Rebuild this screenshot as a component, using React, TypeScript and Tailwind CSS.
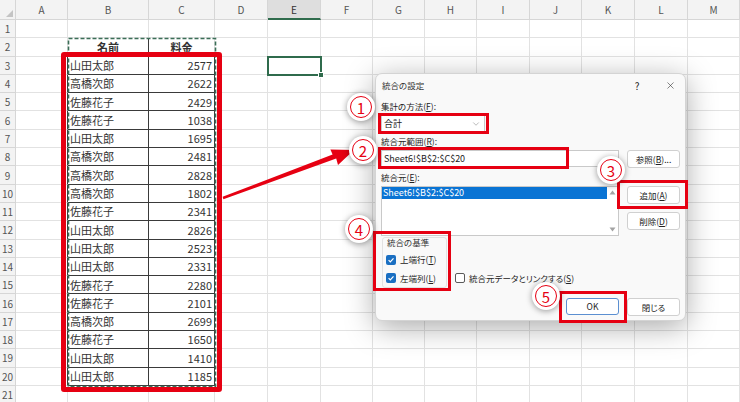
import { ChevronDown, X } from 'lucide-react'

const COLS = ['A', 'B', 'C', 'D', 'E', 'F', 'G', 'H', 'I', 'J', 'K', 'L', 'M']

const rows: [string, number][] = [
  ['山田太郎', 2577],
  ['高橋次郎', 2622],
  ['佐藤花子', 2429],
  ['佐藤花子', 1038],
  ['山田太郎', 1695],
  ['高橋次郎', 2481],
  ['高橋次郎', 2828],
  ['高橋次郎', 1802],
  ['佐藤花子', 2341],
  ['山田太郎', 2826],
  ['山田太郎', 2523],
  ['山田太郎', 2331],
  ['佐藤花子', 2280],
  ['佐藤花子', 2101],
  ['高橋次郎', 2699],
  ['佐藤花子', 1650],
  ['山田太郎', 1410],
  ['山田太郎', 1185],
]

function Sheet() {
  const cells = []

  // column headers
  cells.push(
    <div key="corner" className="relative bg-[#f3f3f3] border-r border-b border-[#d6d6d6]">
      <span className="absolute right-[2px] bottom-[2px] w-0 h-0 border-l-[7px] border-l-transparent border-b-[7px] border-b-[#c4c4c4]" />
    </div>
  )
  COLS.forEach((c) =>
    cells.push(
      <div
        key={c}
        className={
          c === 'E'
            ? 'flex items-center justify-center bg-[#dedede] border-r border-r-[#d6d6d6] border-b-2 border-b-[#2f6b4c] text-[10px] text-[#333]'
            : 'flex items-center justify-center bg-[#f3f3f3] border-r border-b border-[#d6d6d6] text-[10px] text-[#555]'
        }
      >
        {c}
      </div>
    )
  )

  for (let r = 1; r <= 21; r++) {
    cells.push(
      <div
        key={`h${r}`}
        className="flex items-center justify-center bg-[#f3f3f3] border-r border-b border-[#d6d6d6] text-[10px] text-[#555]"
      >
        {r}
      </div>
    )
    COLS.forEach((c) => {
      const inTable = r >= 3 && r <= 20
      const rDark = (inTable && (c === 'A' || c === 'B' || c === 'C')) || (r === 2 && c === 'B')
      const bDark = (inTable || r === 2) && (c === 'B' || c === 'C')
      let content: React.ReactNode = null
      let align = 'justify-start pl-[2px]'
      if (r === 2 && c === 'B') {
        content = <span className="font-bold">名前</span>
        align = 'justify-center'
      } else if (r === 2 && c === 'C') {
        content = <span className="font-bold">料金</span>
        align = 'justify-center'
      } else if (inTable && c === 'B') {
        content = rows[r - 3][0]
      } else if (inTable && c === 'C') {
        content = rows[r - 3][1]
        align = 'justify-end pr-[2px]'
      }
      cells.push(
        <div
          key={`${c}${r}`}
          className={`flex items-center ${align} bg-white border-r border-b text-[11px] text-[#333] ${
            rDark ? 'border-r-[#3a3a3a]' : 'border-r-[#e2e2e2]'
          } ${bDark ? 'border-b-[#3a3a3a]' : 'border-b-[#e2e2e2]'}`}
        >
          {content}
        </div>
      )
    })
  }

  return (
    <div className="grid grid-cols-[16px_52px_81px_66px_53px_53px_52px_52px_52px_53px_52px_53px_53px_52px] grid-rows-[20px_repeat(21,18.3px)]">
      {cells}
    </div>
  )
}

function Check({ on }: { on: boolean }) {
  return on ? (
    <span className="flex items-center justify-center w-[10px] h-[10px] rounded-[2px] bg-[#1a6fc2]">
      <svg width="10" height="10" viewBox="0 0 10 10">
        <polyline points="2.6,5.2 4.3,6.9 7.5,3.3" fill="none" stroke="#fff" strokeWidth="1.2" />
      </svg>
    </span>
  ) : (
    <span className="w-[10px] h-[10px] rounded-[2px] border border-[#5a5a5a] bg-white" />
  )
}

function Btn({ children, primary }: { children: React.ReactNode; primary?: boolean }) {
  return (
    <div
      className={
        primary
          ? 'flex items-center justify-center h-[17px] w-[53px] rounded-[3px] border border-[#5b8fd1] bg-white'
          : 'flex items-center justify-center h-[18px] w-[53px] rounded-[3px] border border-[#d0d0d0] bg-white'
      }
    >
      {children}
    </div>
  )
}

function Dialog() {
  return (
    <div className="absolute left-[375px] top-[73px] w-[311px] h-[248px] rounded-[7px] border border-[#d4d4d4] bg-[#f9f9f9] shadow-[0_6px_30px_rgba(0,0,0,0.34)] flex flex-col text-[8.5px] text-[#222] [font-feature-settings:'palt']">
      {/* title bar */}
      <div className="flex items-center h-[23px] pl-[6px] pr-[1px]">
        <span className="text-[#333]">統合の設定</span>
        <div className="ml-auto flex items-center gap-[9px]">
          <span className="w-[20px] text-center text-[10px]">?</span>
          <span className="w-[28px] flex justify-center">
            <X size={11} strokeWidth={1.3} color="#333" />
          </span>
        </div>
      </div>

      <div className="flex flex-col px-[5px]">
        <div className="h-[18px] flex items-center">
          集計の方法(<u>F</u>):
        </div>
        <div className="h-[17px] w-[104px] flex items-center justify-between pl-[2px] pr-[3px] border border-[#c9c9c9] bg-white text-[9px]">
          <span>合計</span>
          <ChevronDown size={10} strokeWidth={1.2} color="#777" />
        </div>

        <div className="h-[18px] flex items-center">
          統合元範囲(<u>R</u>):
        </div>
        <div className="flex gap-[8px]">
          <div className="h-[17px] w-[239px] flex items-center pl-[2px] border border-[#c9c9c9] bg-white text-[9px]">
            Sheet6!$B$2:$C$20
          </div>
          <Btn>
            参照(<u>B</u>)...
          </Btn>
        </div>

        <div className="h-[18px] flex items-center">
          統合元(<u>E</u>):
        </div>
        <div className="flex gap-[8px]">
          <div className="h-[50px] w-[239px] flex border border-[#c9c9c9] bg-white text-[9px]">
            <div className="flex-1">
              <div className="h-[12px] flex items-center pl-[1px] bg-[#0a74d4] text-white">Sheet6!$B$2:$C$20</div>
            </div>
            <div className="w-[11px] flex flex-col items-center justify-between py-[3px]">
              <svg width="7" height="5" viewBox="0 0 7 5">
                <polygon points="3.5,0.5 6.5,4.5 0.5,4.5" fill="#a3a3a3" />
              </svg>
              <svg width="7" height="5" viewBox="0 0 7 5">
                <polygon points="0.5,0.5 6.5,0.5 3.5,4.5" fill="#a3a3a3" />
              </svg>
            </div>
          </div>
          <div className="flex flex-col gap-[8px]">
            <Btn>
              追加(<u>A</u>)
            </Btn>
            <Btn>
              削除(<u>D</u>)
            </Btn>
          </div>
        </div>

        <div className="flex items-end gap-[8px] mt-[1px]">
          <div className="ml-[1px] w-[65px] flex flex-col border border-[#e2e2e2] rounded-[3px] pl-[3px]">
            <div className="h-[10px] leading-[10px] -mt-[1px] pl-[1px] text-[#333]">統合の基準</div>
            <div className="h-[19px] mt-[3px] flex items-center gap-[4px]">
              <Check on />
              <span>
                上端行(<u>T</u>)
              </span>
            </div>
            <div className="h-[18px] flex items-center gap-[4px]">
              <Check on />
              <span>
                左端列(<u>L</u>)
              </span>
            </div>
          </div>
          <div className="h-[18px] mb-[1px] flex items-center gap-[4px]">
            <Check on={false} />
            <span>
              統合元データとリンクする(<u>S</u>)
            </span>
          </div>
        </div>

        <div className="flex justify-end gap-[8px] mt-[10px]">
          <Btn primary>OK</Btn>
          <Btn>閉じる</Btn>
        </div>
      </div>
    </div>
  )
}

function StepBadge({ n, className }: { n: string; className: string }) {
  return (
    <div
      className={`absolute w-[28px] h-[28px] rounded-full bg-white shadow-[0_1px_6px_rgba(0,0,0,0.4)] flex items-center justify-center ${className}`}
    >
      <div className="w-[22px] h-[22px] rounded-full border-[1.5px] border-[#e60012] flex items-center justify-center text-[15px] leading-none text-[#e60012]">
        {n}
      </div>
    </div>
  )
}

export default function App() {
  return (
    <div className="relative w-[740px] h-[402px] overflow-hidden bg-white font-['Noto_Sans_CJK_JP','Noto_Sans',sans-serif]">
      <Sheet />

      {/* copy marquee around B2:C20 */}
      <svg className="absolute left-[67px] top-[37px] pointer-events-none" width="150" height="351">
        <rect x="1.5" y="1.5" width="147" height="348" fill="none" stroke="#3b6e57" strokeWidth="1.6" strokeDasharray="4 2" />
      </svg>

      {/* active cell E3 */}
      <div className="absolute left-[267px] top-[56px] w-[55px] h-[20px] border-2 border-[#2f6b4c]">
        <span className="absolute -right-[4px] -bottom-[4px] w-[6px] h-[6px] bg-[#2f6b4c] border border-white" />
      </div>

      {/* red frame around data */}
      <div className="absolute left-[61px] top-[52px] w-[161px] h-[340px] border-[5px] border-[#e60012] rounded-[3px]" />

      {/* arrow */}
      <svg className="absolute left-0 top-0 pointer-events-none" width="740" height="402">
        <polygon
          points="222.6,196.8 223.4,199.2 336.2,158.4 338,165 354,150 330.4,149.6 332.6,154.4"
          fill="#e60012"
        />
      </svg>

      <Dialog />

      {/* red highlight boxes */}
      <div className="absolute left-[378px] top-[113px] w-[111px] h-[21px] border-[3px] border-[#e60012]" />
      <div className="absolute left-[378px] top-[147px] w-[191px] h-[22px] border-[3px] border-[#e60012]" />
      <div className="absolute left-[617px] top-[180px] w-[71px] h-[29px] border-[3px] border-[#e60012]" />
      <div className="absolute left-[373px] top-[231px] w-[78px] h-[60px] border-[3px] border-[#e60012]" />
      <div className="absolute left-[559px] top-[291px] w-[68px] h-[32px] border-[3px] border-[#e60012]" />

      <StepBadge n="1" className="left-[347px] top-[93px]" />
      <StepBadge n="2" className="left-[349px] top-[136px]" />
      <StepBadge n="3" className="left-[597px] top-[156px]" />
      <StepBadge n="4" className="left-[345px] top-[215px]" />
      <StepBadge n="5" className="left-[532px] top-[282px]" />
    </div>
  )
}
